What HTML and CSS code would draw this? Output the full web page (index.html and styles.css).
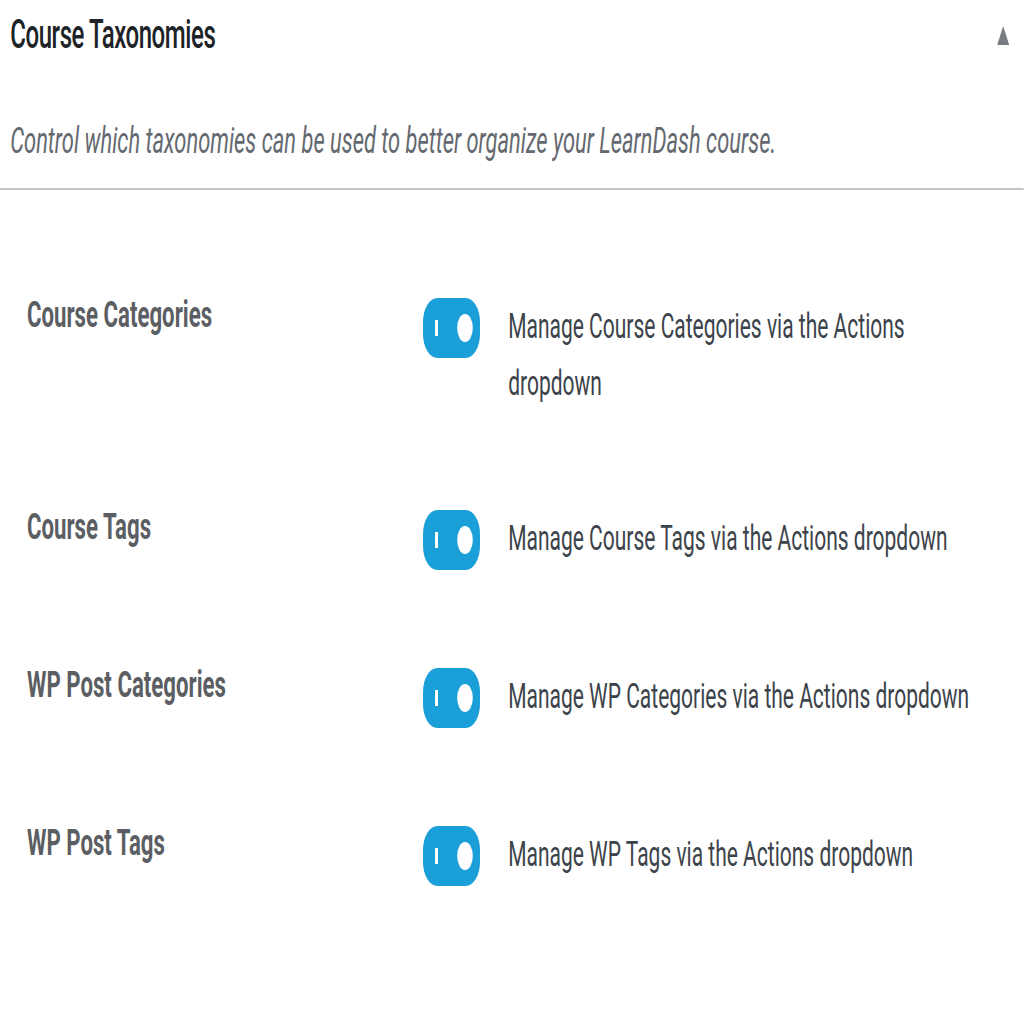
FILE: index.html
```html
<!DOCTYPE html>
<html lang="en">
<head>
<meta charset="utf-8">
<title>Course Taxonomies</title>
<link rel="stylesheet" href="styles.css">
</head>
<body>
<div class="viewport">
<div class="page">
  <header class="panel-head">
    <h2 class="panel-title">Course Taxonomies</h2>
    <svg class="caret" width="20" height="19" viewBox="0 0 20 19" aria-hidden="true"><polygon points="10,0 20,19 0,19" fill="#787c82"/></svg>
  </header>
  <p class="panel-desc">Control which taxonomies can be used to better organize your LearnDash course.</p>
  <div class="sep"></div>
  <div class="rows">
    <div class="row">
      <div class="label">Course Categories</div>
      <div class="control">
        <span class="toggle"><span class="bar"></span><span class="knob"></span></span>
        <span class="text">Manage Course Categories via the Actions dropdown</span>
      </div>
    </div>
    <div class="row">
      <div class="label">Course Tags</div>
      <div class="control">
        <span class="toggle"><span class="bar"></span><span class="knob"></span></span>
        <span class="text">Manage Course Tags via the Actions dropdown</span>
      </div>
    </div>
    <div class="row">
      <div class="label">WP Post Categories</div>
      <div class="control">
        <span class="toggle"><span class="bar"></span><span class="knob"></span></span>
        <span class="text">Manage WP Categories via the Actions dropdown</span>
      </div>
    </div>
    <div class="row">
      <div class="label">WP Post Tags</div>
      <div class="control">
        <span class="toggle"><span class="bar"></span><span class="knob"></span></span>
        <span class="text">Manage WP Tags via the Actions dropdown</span>
      </div>
    </div>
  </div>
</div>
</div>
</body>
</html>
```

FILE: styles.css
```css
html, body {
  margin: 0;
  padding: 0;
  background: #ffffff;
  overflow: hidden;
}
body {
  width: 1024px;
  height: 1024px;
  font-family: Roboto, "Liberation Sans", sans-serif;
}
.viewport {
  width: 1024px;
  height: 1024px;
  overflow: hidden;
  contain: paint;
}
.page {
  width: 1706px;
  transform: scaleX(0.6);
  transform-origin: 0 0;
}
.panel-head {
  display: flex;
  align-items: flex-start;
  justify-content: space-between;
  padding: 11px 24px 0 17px;
}
.panel-title {
  margin: 0;
  font-size: 40px;
  line-height: 48px;
  font-weight: 500;
  letter-spacing: -0.7px;
  color: #1d2327;
}
.caret {
  margin-top: 15px;
  display: block;
}
.panel-desc {
  margin: 60px 0 0 0;
  padding-left: 17px;
  font-size: 36.5px;
  line-height: 44px;
  font-style: italic;
  color: #646970;
}
.sep {
  margin-top: 25px;
  height: 2px;
  background: #c3c4c7;
}
.rows {
  display: flex;
  flex-direction: column;
  gap: 98px;
  padding: 108px 0 0 45px;
}
.row {
  display: grid;
  grid-template-columns: 660px 1fr;
  align-items: start;
}
.label {
  font-size: 37px;
  line-height: 30px;
  font-weight: 700;
  color: #5b5e62;
  padding-top: 2px;
}
.control {
  display: flex;
  align-items: flex-start;
  gap: 47px;
}
.toggle {
  flex: none;
  position: relative;
  width: 95px;
  height: 60px;
  border-radius: 24px;
  background: #1b9fd8;
}
.bar {
  position: absolute;
  left: 20px;
  top: 22px;
  width: 5px;
  height: 16px;
  background: #ffffff;
}
.knob {
  position: absolute;
  left: 57px;
  top: 16px;
  width: 26px;
  height: 28px;
  border-radius: 50%;
  background: #ffffff;
}
.text {
  width: 800px;
  font-size: 35px;
  line-height: 57px;
  color: #3c434a;
}
```
